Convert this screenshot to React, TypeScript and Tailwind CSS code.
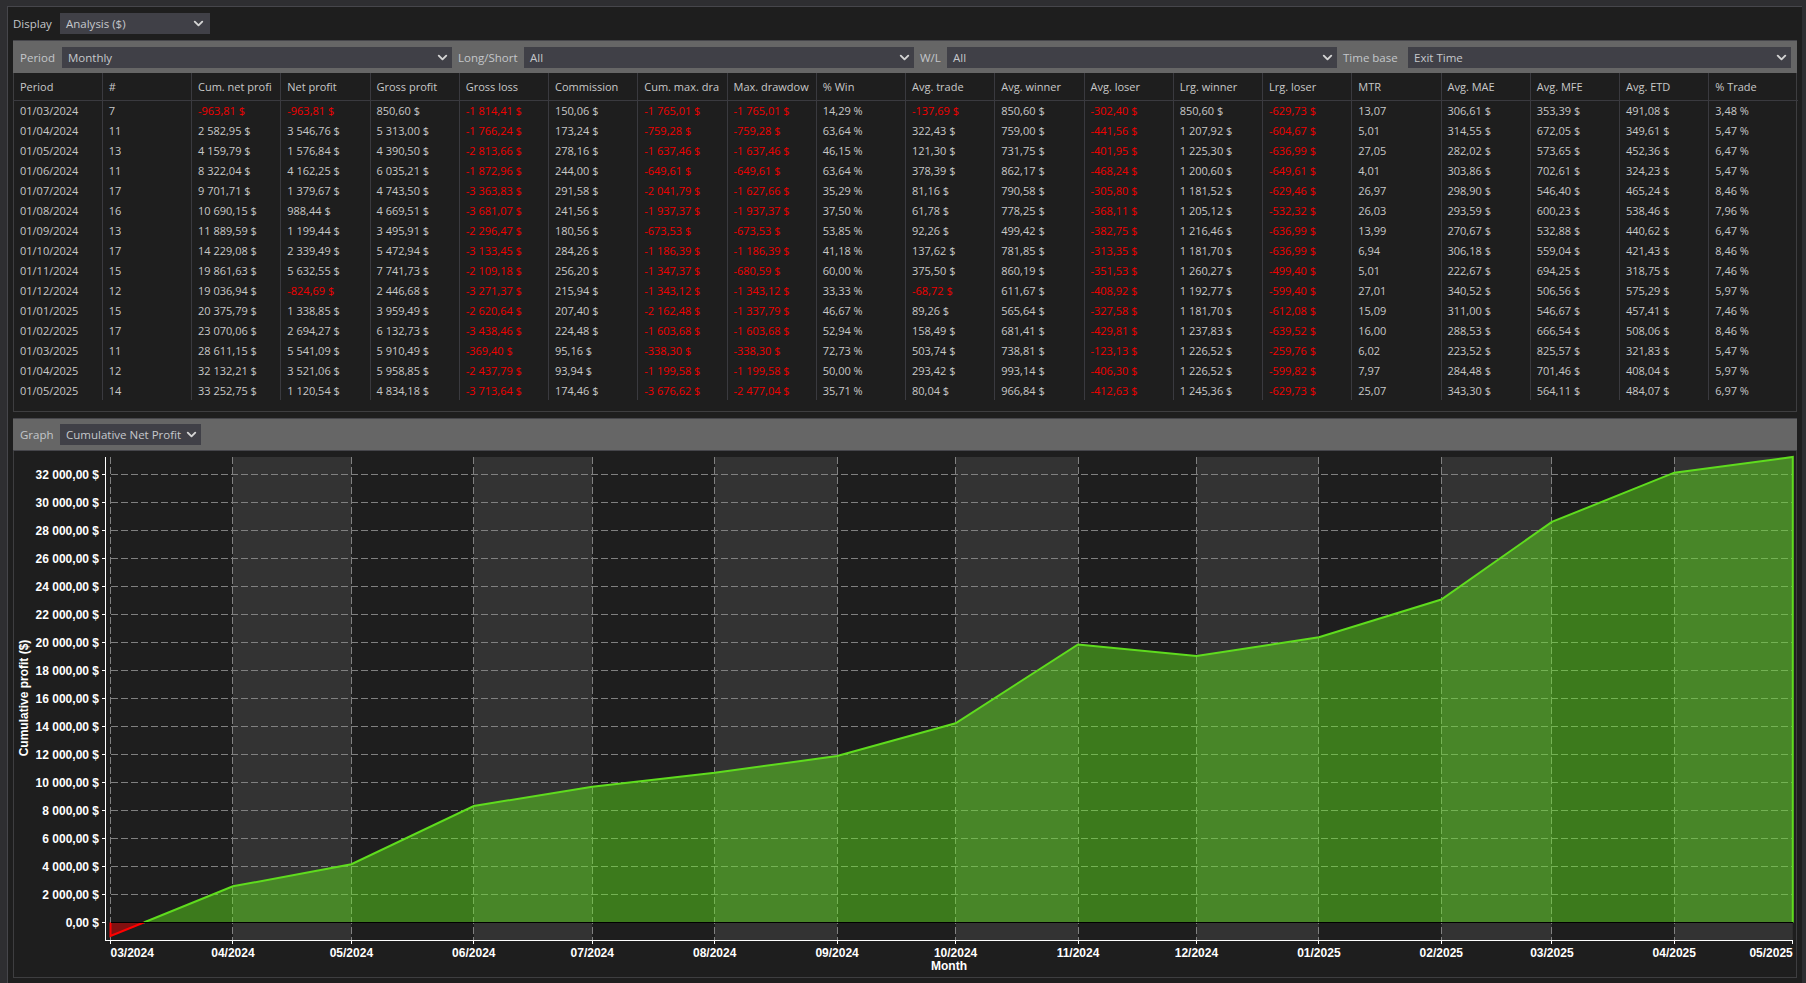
import { ChevronDown } from 'lucide-react';

const headers = [
  'Period', '#', 'Cum. net profi', 'Net profit', 'Gross profit', 'Gross loss', 'Commission',
  'Cum. max. dra', 'Max. drawdow', '% Win', 'Avg. trade', 'Avg. winner', 'Avg. loser',
  'Lrg. winner', 'Lrg. loser', 'MTR', 'Avg. MAE', 'Avg. MFE', 'Avg. ETD', '% Trade',
];

const rows = [
  '01/03/2024|7|-963,81 $|-963,81 $|850,60 $|-1 814,41 $|150,06 $|-1 765,01 $|-1 765,01 $|14,29 %|-137,69 $|850,60 $|-302,40 $|850,60 $|-629,73 $|13,07|306,61 $|353,39 $|491,08 $|3,48 %',
  '01/04/2024|11|2 582,95 $|3 546,76 $|5 313,00 $|-1 766,24 $|173,24 $|-759,28 $|-759,28 $|63,64 %|322,43 $|759,00 $|-441,56 $|1 207,92 $|-604,67 $|5,01|314,55 $|672,05 $|349,61 $|5,47 %',
  '01/05/2024|13|4 159,79 $|1 576,84 $|4 390,50 $|-2 813,66 $|278,16 $|-1 637,46 $|-1 637,46 $|46,15 %|121,30 $|731,75 $|-401,95 $|1 225,30 $|-636,99 $|27,05|282,02 $|573,65 $|452,36 $|6,47 %',
  '01/06/2024|11|8 322,04 $|4 162,25 $|6 035,21 $|-1 872,96 $|244,00 $|-649,61 $|-649,61 $|63,64 %|378,39 $|862,17 $|-468,24 $|1 200,60 $|-649,61 $|4,01|303,86 $|702,61 $|324,23 $|5,47 %',
  '01/07/2024|17|9 701,71 $|1 379,67 $|4 743,50 $|-3 363,83 $|291,58 $|-2 041,79 $|-1 627,66 $|35,29 %|81,16 $|790,58 $|-305,80 $|1 181,52 $|-629,46 $|26,97|298,90 $|546,40 $|465,24 $|8,46 %',
  '01/08/2024|16|10 690,15 $|988,44 $|4 669,51 $|-3 681,07 $|241,56 $|-1 937,37 $|-1 937,37 $|37,50 %|61,78 $|778,25 $|-368,11 $|1 205,12 $|-532,32 $|26,03|293,59 $|600,23 $|538,46 $|7,96 %',
  '01/09/2024|13|11 889,59 $|1 199,44 $|3 495,91 $|-2 296,47 $|180,56 $|-673,53 $|-673,53 $|53,85 %|92,26 $|499,42 $|-382,75 $|1 216,46 $|-636,99 $|13,99|270,67 $|532,88 $|440,62 $|6,47 %',
  '01/10/2024|17|14 229,08 $|2 339,49 $|5 472,94 $|-3 133,45 $|284,26 $|-1 186,39 $|-1 186,39 $|41,18 %|137,62 $|781,85 $|-313,35 $|1 181,70 $|-636,99 $|6,94|306,18 $|559,04 $|421,43 $|8,46 %',
  '01/11/2024|15|19 861,63 $|5 632,55 $|7 741,73 $|-2 109,18 $|256,20 $|-1 347,37 $|-680,59 $|60,00 %|375,50 $|860,19 $|-351,53 $|1 260,27 $|-499,40 $|5,01|222,67 $|694,25 $|318,75 $|7,46 %',
  '01/12/2024|12|19 036,94 $|-824,69 $|2 446,68 $|-3 271,37 $|215,94 $|-1 343,12 $|-1 343,12 $|33,33 %|-68,72 $|611,67 $|-408,92 $|1 192,77 $|-599,40 $|27,01|340,52 $|506,56 $|575,29 $|5,97 %',
  '01/01/2025|15|20 375,79 $|1 338,85 $|3 959,49 $|-2 620,64 $|207,40 $|-2 162,48 $|-1 337,79 $|46,67 %|89,26 $|565,64 $|-327,58 $|1 181,70 $|-612,08 $|15,09|311,00 $|546,67 $|457,41 $|7,46 %',
  '01/02/2025|17|23 070,06 $|2 694,27 $|6 132,73 $|-3 438,46 $|224,48 $|-1 603,68 $|-1 603,68 $|52,94 %|158,49 $|681,41 $|-429,81 $|1 237,83 $|-639,52 $|16,00|288,53 $|666,54 $|508,06 $|8,46 %',
  '01/03/2025|11|28 611,15 $|5 541,09 $|5 910,49 $|-369,40 $|95,16 $|-338,30 $|-338,30 $|72,73 %|503,74 $|738,81 $|-123,13 $|1 226,52 $|-259,76 $|6,02|223,52 $|825,57 $|321,83 $|5,47 %',
  '01/04/2025|12|32 132,21 $|3 521,06 $|5 958,85 $|-2 437,79 $|93,94 $|-1 199,58 $|-1 199,58 $|50,00 %|293,42 $|993,14 $|-406,30 $|1 226,52 $|-599,82 $|7,97|284,48 $|701,46 $|408,04 $|5,97 %',
  '01/05/2025|14|33 252,75 $|1 120,54 $|4 834,18 $|-3 713,64 $|174,46 $|-3 676,62 $|-2 477,04 $|35,71 %|80,04 $|966,84 $|-412,63 $|1 245,36 $|-629,73 $|25,07|343,30 $|564,11 $|484,07 $|6,97 %',
].map((r) => r.split('|'));

// chart points: days since 03/2024, cumulative net profit
const points: [string, number, number][] = [
  ['03/2024', 0, -963.81],
  ['04/2024', 31, 2582.95],
  ['05/2024', 61, 4159.79],
  ['06/2024', 92, 8322.04],
  ['07/2024', 122, 9701.71],
  ['08/2024', 153, 10690.15],
  ['09/2024', 184, 11889.59],
  ['10/2024', 214, 14229.08],
  ['11/2024', 245, 19861.63],
  ['12/2024', 275, 19036.94],
  ['01/2025', 306, 20375.79],
  ['02/2025', 337, 23070.06],
  ['03/2025', 365, 28611.15],
  ['04/2025', 396, 32132.21],
  ['05/2025', 426, 33252.75],
];

const X0 = 110.5;
const ZERO = 922.5;
const TOP = 457;
const BOTTOM = 940.5;
const px = (days: number) => X0 + days * 3.949;
const py = (value: number) => ZERO - value * 0.014;
const snap = (x: number) => Math.round(x - 0.5) + 0.5;

const ticks = Array.from({ length: 17 }, (_, i) => i * 2000);
const crossX = px((963.81 / (963.81 + 2582.95)) * 31);
const positive = points.slice(1);
const linePath = positive.map(([, d, v]) => `${px(d)},${py(v)}`).join(' ');
const lastX = px(426);

function Select({ value, className }: { value: string; className: string }) {
  return (
    <div className={`flex h-[21px] items-center justify-between bg-[#404047] pl-[6px] text-[#c6c8cc] ${className}`}>
      <span className="whitespace-nowrap">{value}</span>
      <ChevronDown className="h-[15px] w-[15px] shrink-0 text-[#d4d4d4]" strokeWidth={3} />
    </div>
  );
}

function Label({ text, className }: { text: string; className: string }) {
  return <div className={`whitespace-nowrap text-[#c4c6ca] ${className}`}>{text}</div>;
}

function Chart() {
  return (
    <svg width="1783" height="526" viewBox="14 451 1783 526" className="block" fontFamily="'Liberation Sans', Arial, sans-serif">
      {/* alternating month bands */}
      {[1, 3, 5, 7, 9, 11, 13].map((i) => (
        <rect
          key={i}
          x={px(points[i][1])}
          y={TOP}
          width={px(points[i + 1][1]) - px(points[i][1])}
          height={BOTTOM - TOP}
          fill="#333333"
        />
      ))}

      {/* grid */}
      {ticks.map((t) => (
        <line key={t} x1={X0} x2={lastX} y1={py(t)} y2={py(t)} stroke="#808080" strokeDasharray="7 3" shapeRendering="crispEdges" />
      ))}
      {points.slice(0, 14).map(([label, d]) => (
        <line key={label} x1={snap(px(d))} x2={snap(px(d))} y1={TOP} y2={BOTTOM} stroke="#808080" strokeDasharray="7 3" shapeRendering="crispEdges" />
      ))}

      {/* area */}
      <polygon points={`${crossX},${ZERO} ${linePath} ${lastX},${ZERO}`} fill="#64f419" fillOpacity={0.43} />
      <polygon points={`${X0},${ZERO} ${X0},${py(-963.81)} ${crossX},${ZERO}`} fill="#ff0000" fillOpacity={0.45} />
      <polyline points={`${crossX},${ZERO} ${linePath} ${lastX},${ZERO}`} fill="none" stroke="#5fdc1e" strokeWidth={2} />
      <polyline points={`${X0},${ZERO} ${X0},${py(-963.81)} ${crossX},${ZERO}`} fill="none" stroke="#ff0000" strokeWidth={2} />
      <line x1={X0} x2={lastX} y1={ZERO} y2={ZERO} stroke="#000000" shapeRendering="crispEdges" />

      {/* axes */}
      <line x1={105.5} x2={105.5} y1={TOP} y2={BOTTOM + 0.5} stroke="#ffffff" shapeRendering="crispEdges" />
      <line x1={105.5} x2={lastX + 0.5} y1={BOTTOM} y2={BOTTOM} stroke="#ffffff" shapeRendering="crispEdges" />
      {ticks.map((t) => (
        <g key={t}>
          <line x1={102} x2={105} y1={py(t)} y2={py(t)} stroke="#ffffff" shapeRendering="crispEdges" />
          <text x={99} y={py(t) + 4} textAnchor="end" fontSize={12} fontWeight={700} fill="#ffffff">
            {t === 0 ? '0,00 $' : `${Math.floor(t / 1000)} 000,00 $`}
          </text>
        </g>
      ))}
      {points.map(([label, d], i) => (
        <g key={label}>
          <line x1={snap(px(d))} x2={snap(px(d))} y1={BOTTOM} y2={BOTTOM + 3} stroke="#ffffff" shapeRendering="crispEdges" />
          <text
            x={px(d)}
            y={957}
            textAnchor={i === 0 ? 'start' : i === points.length - 1 ? 'end' : 'middle'}
            fontSize={12}
            fontWeight={700}
            fill="#ffffff"
          >
            {label}
          </text>
        </g>
      ))}
      <text x={949} y={970} textAnchor="middle" fontSize={12} fontWeight={700} fill="#ffffff">Month</text>
      <text
        transform="translate(27.5 698) rotate(-90)"
        textAnchor="middle"
        fontSize={12}
        fontWeight={700}
        fill="#ffffff"
      >
        Cumulative profit ($)
      </text>
    </svg>
  );
}

export default function App() {
  return (
    <div className="h-[983px] w-[1806px] overflow-hidden bg-[#2e2e31] pl-[7px] pr-[4px] pt-[6px] font-['Open_Sans','Liberation_Sans',sans-serif] text-[11.5px]">
      <div className="flex h-full flex-col border-l border-t border-[#46464b] bg-[#1e1e1e] px-[5px]">
        {/* Display row */}
        <div className="flex h-[33px] shrink-0 items-center">
          <Label text="Display" className="w-[47px]" />
          <Select value="Analysis ($)" className="w-[150px] pr-[4px]" />
        </div>

        {/* Stats panel */}
        <div className="h-[372px] shrink-0 border-x border-b border-[#3e3e40]">
          <div className="-mx-px flex h-[33px] items-center border-t border-[#46464b] bg-[#666666] pt-px">
            <Label text="Period" className="w-[49px] pl-[7px]" />
            <Select value="Monthly" className="w-[390px] pr-[2px]" />
            <Label text="Long/Short" className="w-[72px] pl-[6px]" />
            <Select value="All" className="w-[390px] pr-[2px]" />
            <Label text="W/L" className="w-[33px] pl-[6px]" />
            <Select value="All" className="w-[390px] pr-[2px]" />
            <Label text="Time base" className="w-[71px] pl-[6px]" />
            <Select value="Exit Time" className="flex-1 pr-[2px]" />
            <div className="w-[6px]" />
          </div>
          <table className="-mx-px w-[1785px] table-fixed border-collapse text-[11px]">
            <thead>
              <tr className="h-[27px] border-b border-[#3a3a3f]">
                {headers.map((h) => (
                  <th key={h} className="whitespace-nowrap border-r border-[#3a3a3f] pl-[6px] pt-[2px] text-left font-normal text-[#c8c8c8] first:pl-[7px] last:border-r-0">
                    {h}
                  </th>
                ))}
              </tr>
            </thead>
            <tbody>
              {rows.map((row) => (
                <tr key={row[0]} className="h-[20px]">
                  {row.map((cell, i) => (
                    <td
                      key={i}
                      className={`whitespace-nowrap border-r border-[#3a3a3f] pl-[6px] pt-[2px] first:pl-[7px] last:border-r-0 ${cell.startsWith('-') ? 'text-[#f00000]' : 'text-[#c8c8c8]'}`}
                    >
                      {cell}
                    </td>
                  ))}
                </tr>
              ))}
            </tbody>
          </table>
        </div>

        {/* Graph panel */}
        <div className="mt-[6px] shrink-0 border-x border-b border-[#3e3e40]">
          <div className="-mx-px flex h-[33px] items-center border-y border-[#46464b] bg-[#666666]">
            <Label text="Graph" className="w-[47px] pl-[7px]" />
            <Select value="Cumulative Net Profit" className="w-[141px] pr-[2px]" />
          </div>
          <Chart />
        </div>
      </div>
    </div>
  );
}
